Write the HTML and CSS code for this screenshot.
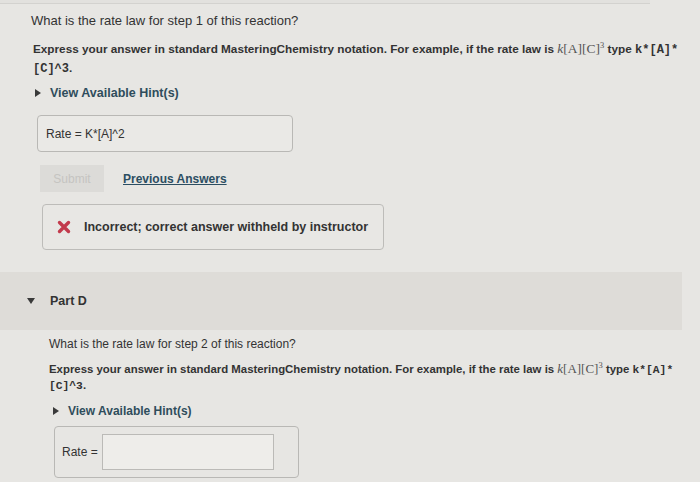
FILE: index.html
```html
<!DOCTYPE html>
<html>
<head>
<meta charset="utf-8">
<link rel="stylesheet" href="styles.css">
</head>
<body>
<div class="topline"></div>
<section class="part-c">
  <p class="question">What is the rate law for step 1 of this reaction?</p>
  <p class="instr">Express your answer in standard MasteringChemistry notation. For example, if the rate law is <span class="math"><i>k</i>[A][C]<sup>3</sup></span> type <span class="mono">k*[A]*</span><br><span class="mono">[C]^3</span>.</p>
  <div class="hint"><span class="tri"></span>View Available Hint(s)</div>
  <div class="answer-box">Rate = K*[A]^2</div>
  <div class="actions">
    <button class="submit">Submit</button>
    <a class="prev">Previous Answers</a>
  </div>
  <div class="feedback">
    <svg class="xicon" width="14" height="14" viewBox="0 0 14 14"><path d="M2.5 2.5 L11.5 11.5 M11.5 2.5 L2.5 11.5" stroke="#c23a4c" stroke-width="3.4" stroke-linecap="round"/></svg>
    <span>Incorrect; correct answer withheld by instructor</span>
  </div>
</section>
<div class="part-head"><span class="tri-down"></span><span class="part-title">Part D</span></div>
<section class="part-d">
  <p class="question">What is the rate law for step 2 of this reaction?</p>
  <p class="instr">Express your answer in standard MasteringChemistry notation. For example, if the rate law is <span class="math"><i>k</i>[A][C]<sup>3</sup></span> type <span class="mono">k*[A]*</span><br><span class="mono">[C]^3</span>.</p>
  <div class="hint"><span class="tri"></span>View Available Hint(s)</div>
  <div class="answer-outer"><span>Rate =</span><div class="answer-input"></div></div>
</section>
</body>
</html>
```
FILE: styles.css
```css
html, body { margin: 0; padding: 0; }
body {
  width: 700px; height: 482px; overflow: hidden;
  background: #e7e6e3;
  font-family: "Liberation Sans", Arial, sans-serif;
  color: #333;
}
p { margin: 0; }
.topline { height: 3px; margin-right: 50px; border-bottom: 1px solid #d3d2cf; background: #e2e1de; }
.part-c { padding: 9px 0 0 31px; }
.question { font-size: 13px; line-height: 16px; }
.instr { font-size: 11.75px; font-weight: bold; line-height: 17px; margin-top: 11px; white-space: nowrap; padding-left: 2px; }
.mono { font-family: "Liberation Mono", monospace; font-weight: bold; font-size: 12px; }
.math { font-family: "Liberation Serif", serif; font-weight: normal; font-size: 13.5px; color: #555; line-height: 0; }
.math sup { font-size: 8.5px; line-height: 0; }
.hint { display: flex; align-items: center; gap: 9px; font-size: 12.5px; font-weight: bold; color: #2f4d5c; margin: 8px 0 0 4px; }
.tri { width: 0; height: 0; border-left: 6px solid #3a3a3a; border-top: 4px solid transparent; border-bottom: 4px solid transparent; }
.answer-box {
  margin: 15px 0 0 6px; width: 246px; height: 35px;
  border: 1px solid #b9b8b5; border-radius: 4px; background: #eae9e6;
  display: flex; align-items: center; padding-left: 8px; font-size: 12px;
}
.actions { display: flex; align-items: center; margin: 13px 0 0 9px; gap: 19px; }
.submit {
  width: 64px; height: 27px; border: none; background: #dcdbd8; color: #c5c4c1;
  font-family: inherit; font-size: 12px; padding: 0;
}
.prev { font-size: 12px; font-weight: bold; color: #2c4e62; text-decoration: underline; }
.feedback {
  margin: 12px 0 0 11px; width: 342px; height: 46px;
  border: 1px solid #bdbcb9; border-radius: 4px; background: #e8e7e4;
  display: flex; align-items: center; gap: 13px; padding-left: 14px; box-sizing: border-box;
  font-size: 12.5px; font-weight: bold;
}
.part-head {
  margin-top: 22px; width: 682px; height: 58px; background: #dedcd8;
  display: flex; align-items: center; padding-left: 27px; box-sizing: border-box; gap: 15px;
}
.tri-down { width: 0; height: 0; border-top: 6px solid #3a3a3a; border-left: 4px solid transparent; border-right: 4px solid transparent; }
.part-title { font-size: 12.5px; font-weight: bold; color: #333; }
.part-d { padding: 6px 0 0 49px; }
.part-d .question { font-size: 12px; }
.part-d .instr { font-size: 11.4px; line-height: 15px; margin-top: 10px; padding-left: 0; }
.part-d .mono { font-size: 11.3px; }
.part-d .math { font-size: 13px; }
.part-d .hint { font-size: 12px; margin: 10px 0 0 4px; }
.answer-outer {
  margin: 8px 0 0 5px; width: 236px; height: 50px; border: 1px solid #b9b8b5; border-radius: 4px;
  display: flex; align-items: center; gap: 4px; padding-left: 7px; font-size: 12px;
}
.answer-input { width: 170px; height: 34px; border: 1px solid #bbbab7; background: #eeedea; }
```
